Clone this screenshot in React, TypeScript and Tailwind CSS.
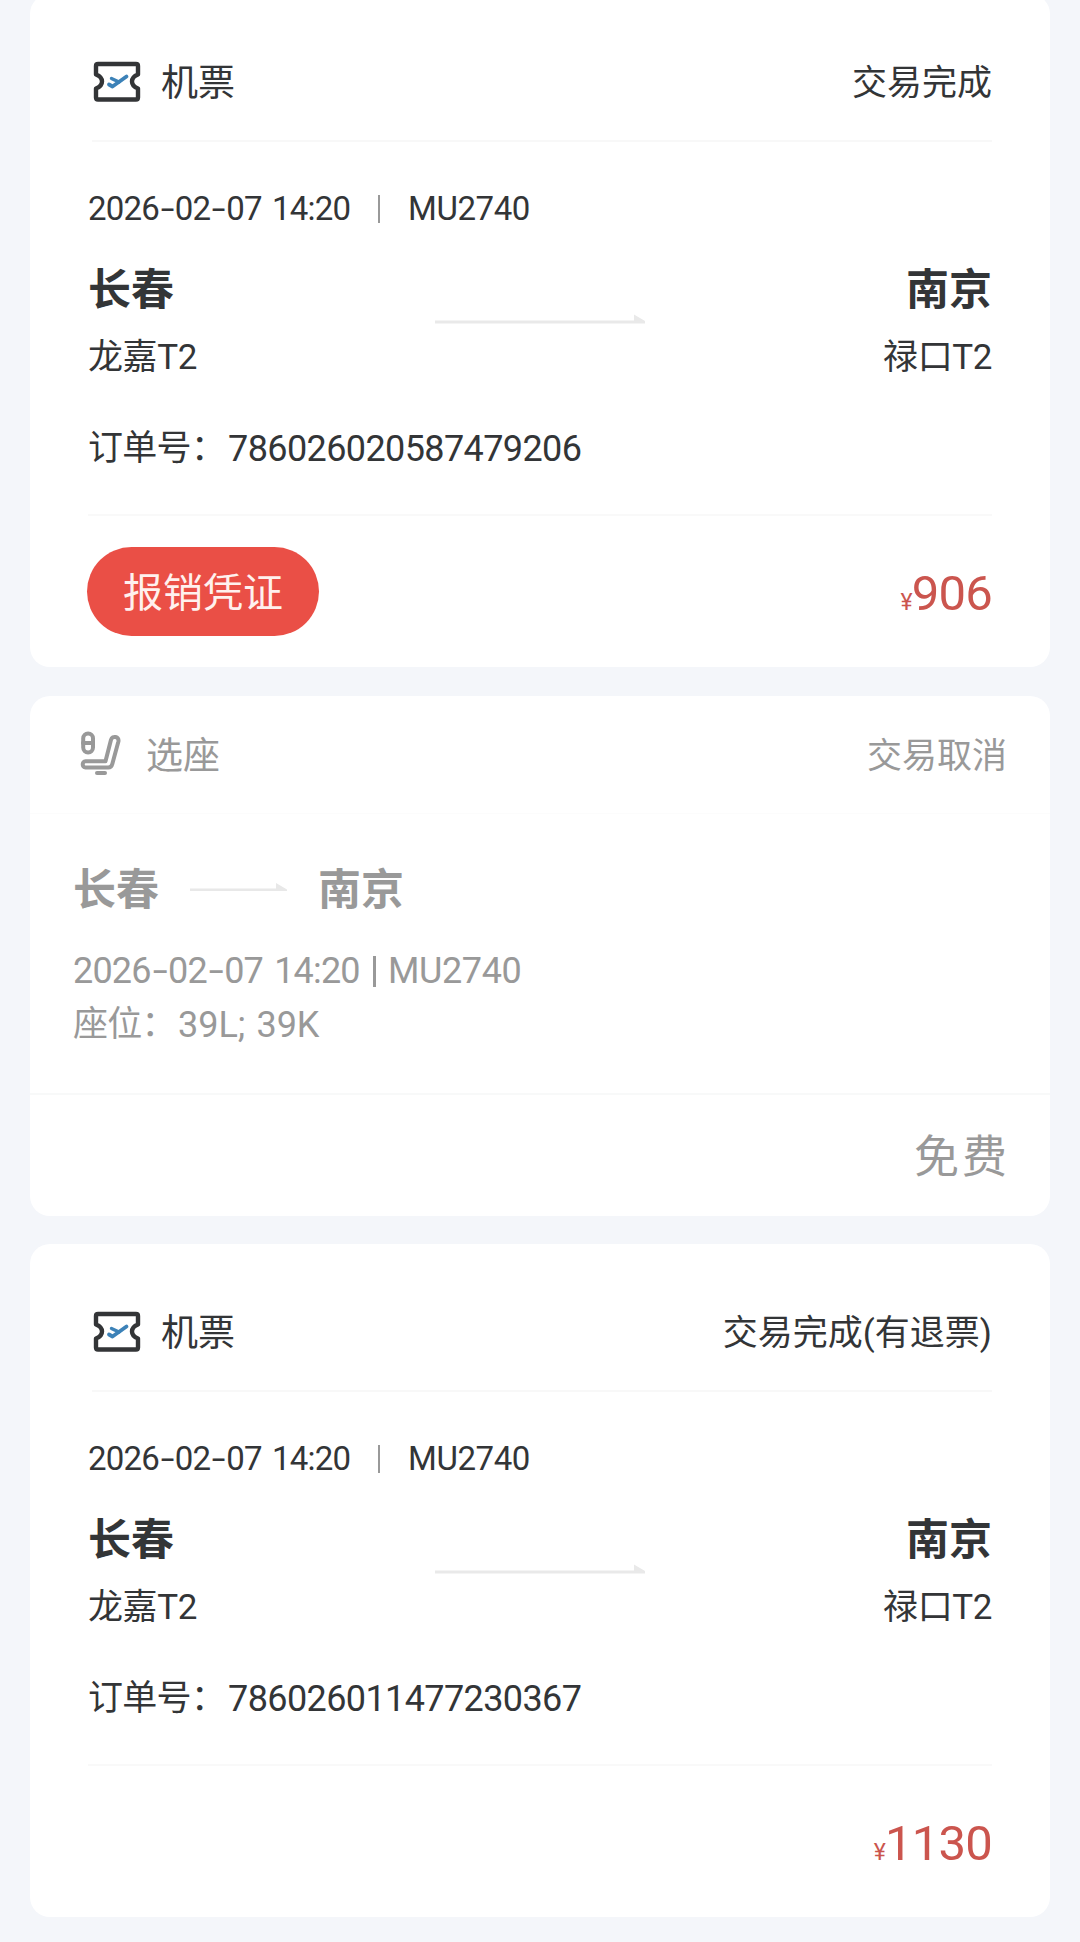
import { Fragment } from 'react';

interface TicketOrder {
  status: string;
  date: string;
  flight: string;
  orderNo: string;
  price: string;
  voucher?: boolean;
}

const orders: TicketOrder[] = [
  {
    status: '交易完成',
    date: '2026-02-07 14:20',
    flight: 'MU2740',
    orderNo: '786026020587479206',
    price: '906',
    voucher: true,
  },
  {
    status: '交易完成(有退票)',
    date: '2026-02-07 14:20',
    flight: 'MU2740',
    orderNo: '786026011477230367',
    price: '1130',
  },
];

const TicketIcon = () => (
  <svg width="48" height="42" viewBox="0 0 48 42" fill="none">
    <path
      d="M5 3H43Q45 3 45 5V13.5C41 15 39 17.5 39 20.5C39 23.5 41 26 45 27.5V36.5Q45 38.5 43 38.5H5Q3 38.5 3 36.5V27.5C7 26 9 23.5 9 20.5C9 17.5 7 15 3 13.5V5Q3 3 5 3Z"
      stroke="#333537"
      strokeWidth="4.4"
      strokeLinejoin="round"
    />
    <path d="M16 23.5L19.5 25.5L33.5 15.5" stroke="#3c82b8" strokeWidth="3.8" strokeLinecap="round" strokeLinejoin="round" />
    <path d="M18.5 17.5L26 21" stroke="#3c82b8" strokeWidth="3.4" strokeLinecap="round" />
  </svg>
);

const SeatIcon = () => (
  <svg width="42" height="46" viewBox="0 0 42 46" fill="none" stroke="#999999" strokeWidth="4" strokeLinecap="round" strokeLinejoin="round">
    <rect x="3.2" y="3.4" width="9.8" height="19" rx="4.9" />
    <path d="M3 13H13" />
    <path d="M5.5 31.3H25.5L31 9.8C32.4 5 39.5 6.6 38.4 11.5L32.3 34Q31.4 37.5 28.3 37.5H5.5C1.8 37.5 1.8 31.3 5.5 31.3Z" />
    <path d="M17 43H25" />
  </svg>
);

const DateText = ({ value }: { value: string }) => (
  <>
    {value.split('-').map((part, i) => (
      <Fragment key={i}>
        {i > 0 && <span className="inline-block w-[0.48em] scale-x-150 text-center">-</span>}
        {part}
      </Fragment>
    ))}
  </>
);

const TicketCard = ({ order }: { order: TicketOrder }) => (
  <section className="h-[673px] rounded-[20px] bg-white px-[58px] text-[#333537]">
    <header className="flex h-[146px] items-start justify-between pt-[67px] leading-[46px]">
      <div className="flex items-center">
        <div className="-mt-[5px] ml-[5px]">
          <TicketIcon />
        </div>
        <span className="ml-5 text-[37px]">机票</span>
      </div>
      <span className="text-[35px]">{order.status}</span>
    </header>
    <div className="ml-1 h-0.5 bg-[#f8f8f8]" />

    <div className="mt-[47px] flex h-10 items-center text-[33px] leading-10 tracking-[-0.8px]">
      <span className="w-[291px] [word-spacing:3px]">
        <DateText value={order.date} />
      </span>
      <span className="-ml-px mr-7 h-[28px] w-0.5 bg-[#999999]" />
      <span className="tracking-[-0.4px]">{order.flight}</span>
    </div>

    <div className="mt-[34px] grid grid-cols-[1fr_auto_1fr] items-center">
      <div>
        <div className="text-[43px] font-bold leading-[54px]">长春</div>
        <div className="mt-[18px] text-[35px] leading-[46px] tracking-[-0.4px]">龙嘉T2</div>
      </div>
      <svg width="210" height="18" viewBox="0 0 210 18">
        <path d="M0 7.5H199V1.5L210 8V10.5H0Z" fill="#e9e9e9" />
      </svg>
      <div className="text-right">
        <div className="text-[43px] font-bold leading-[54px]">南京</div>
        <div className="mt-[18px] text-[35px] leading-[46px] tracking-[-0.4px]">禄口T2</div>
      </div>
    </div>

    <div className="mt-[45px] flex text-[36px] leading-[46px]">
      <span className="w-[140px] whitespace-nowrap text-[35px] tracking-[-0.7px]">订单号：</span>
      <span className="tracking-[-0.6px]">{order.orderNo}</span>
    </div>
    <div className="mt-[42px] h-0.5 bg-[#f9f9f9]" />

    <footer className="flex items-start">
      {order.voucher && (
        <button className="-ml-px mt-[31px] h-[89px] w-[232px] rounded-full bg-[#ea4f46] pt-[5px] text-[40px] text-[#fff1ee]">
          报销凭证
        </button>
      )}
      <div className="ml-auto mt-12 text-[49px] leading-[60px] tracking-[-0.8px] text-[#cb554e]">
        <span className="text-[23px]">¥</span>
        {order.price}
      </div>
    </footer>
  </section>
);

const SeatCard = () => (
  <section className="h-[520px] rounded-[20px] bg-white text-[#999999]">
    <header className="flex h-[118px] items-start justify-between border-b border-[#fcfcfc] pl-[50px] pr-[43px] pt-[38px] leading-[46px]">
      <div className="flex items-center">
        <div className="-mt-2">
          <SeatIcon />
        </div>
        <span className="ml-6 text-[37px]">选座</span>
      </div>
      <span className="text-[35px]">交易取消</span>
    </header>

    <div className="h-[279px] pl-[43px] pt-[49px]">
      <div className="flex items-center text-[43px] font-bold leading-[54px]">
        长春
        <svg className="mx-[31px]" width="97" height="18" viewBox="0 0 97 18">
          <path d="M0 7.5H86V2L97 8.5V10H0Z" fill="#e8e8e8" />
        </svg>
        南京
      </div>
      <div className="mt-[31px] flex items-center text-[36px] leading-[46px] tracking-[-0.8px]">
        <span className="w-[300px] [word-spacing:3px]">
          <DateText value="2026-02-07 14:20" />
        </span>
        <span className="mr-3 h-[31px] w-[3px] bg-[#999999]" />
        <span className="tracking-[-0.4px]">MU2740</span>
      </div>
      <div className="mt-2 flex text-[36px] leading-[46px]">
        <span className="w-[105px] whitespace-nowrap text-[35px] tracking-[-0.7px]">座位：</span>
        <span className="[word-spacing:2px]">39L; 39K</span>
      </div>
    </div>

    <footer className="flex h-[123px] justify-end border-t-2 border-[#f8f9f9] pr-[40px] pt-[33px] text-[45px] leading-[60px] tracking-[3px]">
      免费
    </footer>
  </section>
);

export default function App() {
  return (
    <main className="h-[1942px] overflow-hidden bg-[#f4f6fa] px-[30px] font-[Roboto,'Noto_Sans_CJK_SC',sans-serif]">
      <div className="-mt-1.5 flex flex-col">
        <TicketCard order={orders[0]} />
        <div className="mb-7 mt-[29px]">
          <SeatCard />
        </div>
        <TicketCard order={orders[1]} />
      </div>
    </main>
  );
}
